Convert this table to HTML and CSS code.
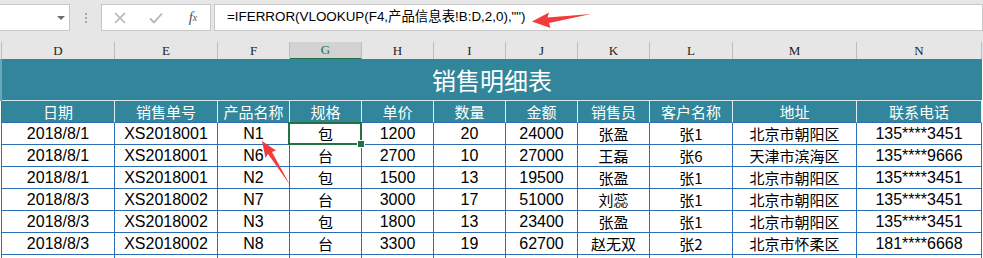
FILE: index.html
```html
<!DOCTYPE html>
<html lang="zh-CN">
<head>
<meta charset="utf-8">
<title>销售明细表</title>
<link rel="stylesheet" href="styles.css">
</head>
<body>
<div class="toolbar">
  <div class="namebox"><span class="caret"></span></div>
  <div class="grip"><i></i><i></i><i></i></div>
  <div class="fxbtns">
    <span class="slot"><svg width="12" height="12" viewBox="0 0 12 12"><path d="M1 1L11 11M11 1L1 11" stroke="#b4b4b4" stroke-width="1.6" fill="none"/></svg></span>
    <span class="slot"><svg width="14" height="12" viewBox="0 0 14 12"><path d="M1 6.5L5 10.5L13 1.5" stroke="#b4b4b4" stroke-width="1.8" fill="none"/></svg></span>
    <span class="slot fx">f<sub>x</sub></span>
  </div>
  <div class="formula">=IFERROR(VLOOKUP(F4,产品信息表!B:D,2,0),"")</div>
</div>

<div class="grid colhead">
  <div class="ch"></div>
  <div class="ch">D</div>
  <div class="ch">E</div>
  <div class="ch">F</div>
  <div class="ch active">G</div>
  <div class="ch">H</div>
  <div class="ch">I</div>
  <div class="ch">J</div>
  <div class="ch">K</div>
  <div class="ch">L</div>
  <div class="ch">M</div>
  <div class="ch">N</div>
</div>

<div class="grid sheet">
  <div class="edge title-edge"></div>
  <div class="title">销售明细表</div>

  <div class="edge"></div>
  <div class="hd">日期</div><div class="hd">销售单号</div><div class="hd">产品名称</div><div class="hd">规格</div><div class="hd">单价</div><div class="hd">数量</div><div class="hd">金额</div><div class="hd">销售员</div><div class="hd">客户名称</div><div class="hd">地址</div><div class="hd">联系电话</div>

  <div class="edge"></div>
  <div class="c">2018/8/1</div><div class="c">XS2018001</div><div class="c">N1</div><div class="c cjk sel">包</div><div class="c">1200</div><div class="c">20</div><div class="c">24000</div><div class="c cjk">张盈</div><div class="c cjk">张1</div><div class="c cjk">北京市朝阳区</div><div class="c">135****3451</div>

  <div class="edge"></div>
  <div class="c">2018/8/1</div><div class="c">XS2018001</div><div class="c">N6</div><div class="c cjk">台</div><div class="c">2700</div><div class="c">10</div><div class="c">27000</div><div class="c cjk">王磊</div><div class="c cjk">张6</div><div class="c cjk">天津市滨海区</div><div class="c">135****9666</div>

  <div class="edge"></div>
  <div class="c">2018/8/1</div><div class="c">XS2018001</div><div class="c">N2</div><div class="c cjk">包</div><div class="c">1500</div><div class="c">13</div><div class="c">19500</div><div class="c cjk">张盈</div><div class="c cjk">张1</div><div class="c cjk">北京市朝阳区</div><div class="c">135****3451</div>

  <div class="edge"></div>
  <div class="c">2018/8/3</div><div class="c">XS2018002</div><div class="c">N7</div><div class="c cjk">台</div><div class="c">3000</div><div class="c">17</div><div class="c">51000</div><div class="c cjk">刘蕊</div><div class="c cjk">张1</div><div class="c cjk">北京市朝阳区</div><div class="c">135****3451</div>

  <div class="edge"></div>
  <div class="c">2018/8/3</div><div class="c">XS2018002</div><div class="c">N3</div><div class="c cjk">包</div><div class="c">1800</div><div class="c">13</div><div class="c">23400</div><div class="c cjk">张盈</div><div class="c cjk">张1</div><div class="c cjk">北京市朝阳区</div><div class="c">135****3451</div>

  <div class="edge"></div>
  <div class="c">2018/8/3</div><div class="c">XS2018002</div><div class="c">N8</div><div class="c cjk">台</div><div class="c">3300</div><div class="c">19</div><div class="c">62700</div><div class="c cjk">赵无双</div><div class="c cjk">张2</div><div class="c cjk">北京市怀柔区</div><div class="c">181****6668</div>

  <div class="edge"></div>
  <div class="c stub"></div><div class="c stub"></div><div class="c stub"></div><div class="c stub"></div><div class="c stub"></div><div class="c stub"></div><div class="c stub"></div><div class="c stub"></div><div class="c stub"></div><div class="c stub"></div><div class="c stub"></div>
</div>

<svg class="arrows" width="983" height="258" viewBox="0 0 983 258">
  <polygon points="532,21.5 549,12.5 547.5,17.5 591,14 549,23 550.5,28" fill="#f23b3b"/>
  <polygon points="262,141 276,150.5 272,152 290,185 268,154 265.5,158" fill="#f23b3b"/>
</svg>
</body>
</html>
```

FILE: styles.css
```css
* { box-sizing: border-box; }

html, body {
  margin: 0;
  padding: 0;
}

body {
  width: 983px;
  height: 258px;
  overflow: hidden;
  background: #ffffff;
  font-family: "Liberation Sans", "Noto Sans CJK SC", sans-serif;
  color: #000;
  position: relative;
}

/* ---------- formula bar ---------- */
.toolbar {
  height: 42px;
  background: #e6e6e6;
  display: flex;
  align-items: flex-start;
  padding-top: 4px;
}

.namebox {
  width: 70px;
  height: 27px;
  background: #fff;
  border: 1px solid #c6c6c6;
  border-left: none;
  position: relative;
}

.caret {
  position: absolute;
  left: 57px;
  top: 11px;
  width: 0;
  height: 0;
  border-left: 4px solid transparent;
  border-right: 4px solid transparent;
  border-top: 4px solid #6d6d6d;
}

.grip {
  width: 31px;
  height: 27px;
  display: flex;
  flex-direction: column;
  align-items: center;
  justify-content: center;
  gap: 2px;
  padding-top: 1px;
}

.grip i {
  display: block;
  width: 2px;
  height: 2px;
  background: #a6a6a6;
}

.fxbtns {
  width: 110px;
  height: 27px;
  background: #fff;
  border: 1px solid #c6c6c6;
  display: grid;
  grid-template-columns: 36px 36px 36px;
  align-items: center;
}

.slot {
  display: flex;
  justify-content: center;
  align-items: center;
  height: 25px;
}

.fx {
  font-family: "Liberation Serif", serif;
  font-style: italic;
  font-size: 15px;
  color: #555;
  padding-left: 2px;
}

.fx sub {
  font-size: 10px;
  vertical-align: -1px;
}

.formula {
  width: 769px;
  height: 27px;
  margin-left: 3px;
  background: #fff;
  border: 1px solid #c6c6c6;
  padding-left: 12px;
  font-size: 13.4px;
  line-height: 24px;
  white-space: nowrap;
}

/* ---------- grid ---------- */
.grid {
  display: grid;
  grid-template-columns: 2px 113px 103px repeat(6, 72px) 83px 124px 125px;
}

.colhead {
  height: 17px;
  background: #e6e6e6;
}

.ch {
  border-right: 1px solid #bdbdbd;
  font-family: "Liberation Serif", "DejaVu Serif", serif;
  font-size: 13px;
  line-height: 17px;
  text-align: center;
  color: #222;
}

.ch.active {
  background: #d2d2d2;
  color: #217346;
  border-bottom: 2px solid #217346;
  line-height: 16px;
}

.sheet {
  grid-template-rows: 42px repeat(7, 22px) 3px;
}

.edge {
  border-right: 1px solid #2d6db3;
}

.title-edge {
  border-right: none;
  background: #6aa7b8;
}

.title {
  grid-column: 2 / -1;
  background: #31869b;
  color: #fff;
  font-family: "Noto Sans CJK SC", sans-serif;
  font-size: 24px;
  line-height: 42px;
  text-align: center;
  border-bottom: 1px solid #d7e7ec;
}

.hd {
  background: #31869b;
  color: #fff;
  font-family: "Noto Sans CJK SC", sans-serif;
  font-size: 15px;
  line-height: 21px;
  text-align: center;
  border-right: 1px solid #e4eff3;
  border-bottom: 1px solid #2d6db3;
  white-space: nowrap;
}

.c {
  border-right: 1px solid #2d6db3;
  border-bottom: 1px solid #2d6db3;
  text-align: center;
  font-size: 16px;
  line-height: 21px;
  white-space: nowrap;
  position: relative;
}

.c.stub {
  border-bottom: none;
}

.c.cjk {
  font-family: "Noto Sans CJK SC", sans-serif;
  font-size: 15px;
}

.c.sel::after {
  content: "";
  position: absolute;
  left: -2px;
  top: -1px;
  right: -1px;
  bottom: -1px;
  border: 2px solid #217346;
}

.c.sel::before {
  content: "";
  position: absolute;
  right: -4px;
  bottom: -4px;
  width: 6px;
  height: 6px;
  background: #217346;
  border: 1px solid #fff;
  z-index: 2;
}

/* ---------- annotation arrows ---------- */
.arrows {
  position: absolute;
  left: 0;
  top: 0;
  pointer-events: none;
}
```
